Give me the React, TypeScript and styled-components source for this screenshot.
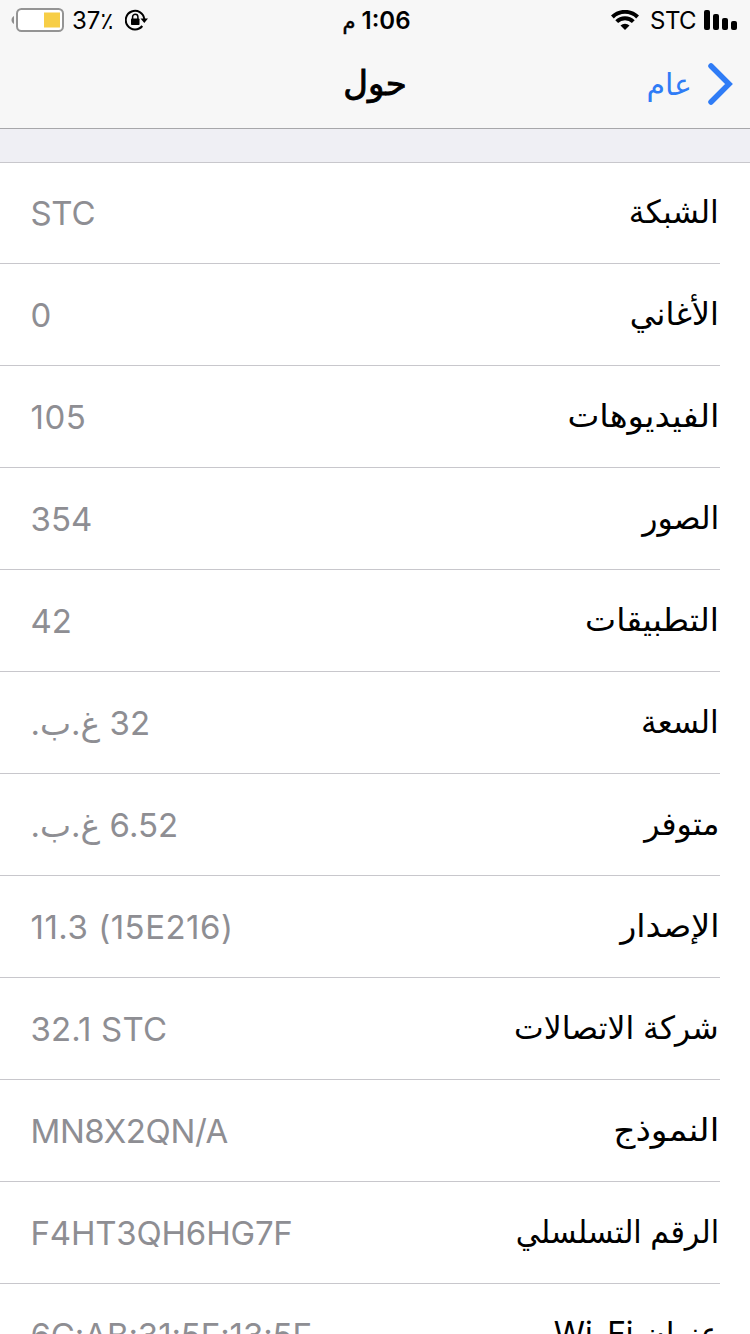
import React from 'react';
import styled, { createGlobalStyle } from 'styled-components';

const Global = createGlobalStyle`
  * { box-sizing: border-box; }
  html, body { margin: 0; height: 1334px; overflow: hidden; background: #fff; }
`;
const Screen = styled.main`
  direction: rtl;
  width: 750px;
  height: 1334px;
  overflow: hidden;
  background: #fff;
  font-family: Inter, "DejaVu Sans", sans-serif;
  color: #000;
`;
const Header = styled.header`
  height: 129px;
  background: #f7f7f7;
  border-bottom: 1px solid #a7a7aa;
`;
const StatusBar = styled.div`
  height: 40px;
  display: grid;
  grid-template-columns: 1fr auto 1fr;
  align-items: center;
  padding: 0 13px 0 11px;
  font-size: 24px;
`;
const StatusGroup = styled.div<{ $end?: boolean }>`
  display: flex;
  align-items: center;
  justify-content: ${p => (p.$end ? 'flex-end' : 'flex-start')};
`;
const Carrier = styled.span`
  margin: 0 8px 0 11px;
  letter-spacing: -0.6px;
`;
const Percent = styled.span`
  margin: 0 12px 0 7px;
`;
const Clock = styled.time`
  padding-left: 5px;
  font-size: 24px;
  font-weight: 600;
`;
const Meridiem = styled.span`
  font-weight: 400;
  -webkit-text-stroke: 0.5px #000;
  font-size: 21px;
`;
const NavBar = styled.nav`
  height: 88px;
  display: grid;
  grid-template-columns: 1fr auto 1fr;
  align-items: center;
  padding: 0 17px;
`;
const Back = styled.a`
  display: flex;
  align-items: center;
  gap: 15px;
  font-size: 30px;
  color: #2f7cf6;
`;
const Title = styled.h1`
  margin: 0;
  padding-bottom: 3px;
  font-size: 34px;
  font-weight: 400;
  -webkit-text-stroke: 0.9px #000;
`;
const Gap = styled.div`
  height: 34px;
  background: #efeff4;
  border-bottom: 1px solid #c8c7cc;
`;
const Row = styled.div`
  height: 102px;
  margin-right: 30px;
  padding: 0 1px 0 30.5px;
  display: flex;
  align-items: center;
  justify-content: space-between;
  border-bottom: 1px solid #c8c7cc;
  &:first-child { height: 101px; }
`;
const Label = styled.span<{ $stretch: number }>`
  padding-bottom: 3px;
  font-size: 32px;
  transform: scaleX(${p => p.$stretch});
  transform-origin: right center;
`;
const Value = styled.span<{ $tracking: number }>`
  font-size: 33px;
  letter-spacing: ${p => p.$tracking}px;
  color: #8e8e93;
`;

const rows: [string, string, number, number][] = [
  ['الشبكة', 'STC', 0.98, -0.3],
  ['الأغاني', '0', 1, 0],
  ['الفيديوهات', '105', 1.06, 0.5],
  ['الصور', '354', 0.985, 0],
  ['التطبيقات', '42', 1.03, 0],
  ['السعة', '32 غ.ب.', 0.975, 0.2],
  ['متوفر', '6.52 غ.ب.', 0.985, 0.15],
  ['الإصدار', '\u200e11.3 (15E216)\u200e', 1.04, 0.5],
  ['شركة الاتصالات', '\u200e32.1 STC', 0.985, 0.15],
  ['النموذج', 'MN8X2QN/A', 1.08, -0.4],
  ['الرقم التسلسلي', 'F4HT3QH6HG7F', 0.945, -0.2],
  ['عنوان Wi-Fi', '6C:AB:31:5F:13:5F', 0.99, -0.1],
];

const BatteryIcon = () => (
  <svg width="54" height="24" viewBox="0 0 54 24">
    <path d="M3 8C-0.3 9.5-0.3 14.500 3 16Z" fill="#8f8f8f" />
    <rect x="6" y="1" width="46" height="22" rx="4.500" fill="#fff" stroke="#949494" strokeWidth="2" />
    <rect x="33" y="4.500" width="16" height="15" fill="#f7ce46" />
  </svg>
);
const RotationLockIcon = () => (
  <svg width="24" height="22" viewBox="0 0 24 22">
    <path d="M17.300 17A9.300 9.300 0 1 1 19.300 10" fill="none" stroke="#000" strokeWidth="2" />
    <path d="M15.500 9.500h7.500l-3.700 4.500z" />
    <rect x="6" y="9.500" width="8.500" height="6.500" rx="0.8" />
    <path d="M7.600 10V7.800a2.650 2.650 0 0 1 5.300 0v2.200" fill="none" stroke="#000" strokeWidth="1.500" />
  </svg>
);
const WifiIcon = () => (
  <svg width="28" height="20" viewBox="0 0 28 20">
    <path d="M1.400 7a18 18 0 0 1 25.200 0M5.700 11.700a11.800 11.800 0 0 1 16.600 0" fill="none" stroke="#000" strokeWidth="4" />
    <path d="M14 20l-4.500-4.500a6.400 6.400 0 0 1 9 0z" />
  </svg>
);
const SignalIcon = () => (
  <svg width="33" height="20" viewBox="0 0 33 20">
    <rect x="0" y="0" width="6" height="20" rx="2" />
    <rect x="9" y="4" width="6" height="16" rx="2" />
    <rect x="18" y="8" width="6" height="12" rx="2" />
    <rect x="27" y="11" width="6" height="9" rx="2" />
  </svg>
);

export default function App() {
  return (
    <Screen>
      <Global />
      <Header>
        <StatusBar>
          <StatusGroup><SignalIcon /><Carrier>STC</Carrier><WifiIcon /></StatusGroup>
          <Clock>1:06 <Meridiem>م</Meridiem></Clock>
          <StatusGroup $end><RotationLockIcon /><Percent dir="ltr">37٪</Percent><BatteryIcon /></StatusGroup>
        </StatusBar>
        <NavBar>
          <Back>
            <svg width="26" height="44" viewBox="0 0 26 44">
              <path d="M4 4l18 18L4 40" fill="none" stroke="#2f7cf6" strokeWidth="5.500" strokeLinecap="round" />
            </svg>
            عام
          </Back>
          <Title>حول</Title>
        </NavBar>
      </Header>
      <Gap />
      <section>
        {rows.map(([label, value, stretch, tracking]) => (
          <Row key={label}>
            <Label $stretch={stretch}>{label}</Label>
            <Value $tracking={tracking}>{value}</Value>
          </Row>
        ))}
      </section>
    </Screen>
  );
}
